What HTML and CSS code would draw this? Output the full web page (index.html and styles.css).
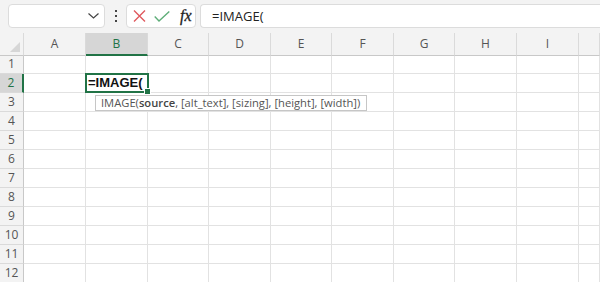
FILE: index.html
```html
<!DOCTYPE html>
<html lang="en">
<head>
  <meta charset="UTF-8" />
  <title>Book1 - Excel</title>
  <link rel="stylesheet" href="styles.css">
</head>
<body>
  <div class="toolbar">
    <div class="namebox">
      <svg class="chevron" width="11" height="6" viewBox="0 0 11 6"><path d="M0.5 0.5 L5.5 5 L10.5 0.5" fill="none" stroke="#444" stroke-width="1.2"/></svg>
    </div>
    <div class="dots"><span></span><span></span><span></span></div>
    <div class="fxbtns">
      <svg width="13" height="12" viewBox="0 0 13 12"><path d="M1 0.5 L12 11.5 M12 0.5 L1 11.5" stroke="#e0595e" stroke-width="1.4" fill="none"/></svg>
      <svg width="16" height="11" viewBox="0 0 16 11"><path d="M0.7 5.5 L5 10 L15.3 0.5" stroke="#5fae79" stroke-width="1.4" fill="none"/></svg>
      <span class="fx">fx</span>
    </div>
    <div class="formula">=IMAGE(</div>
  </div>

  <div class="sheet">
    <div class="corner"><span class="tri"></span></div>
    <div class="colhead">A</div>
    <div class="colhead sel">B</div>
    <div class="colhead">C</div>
    <div class="colhead">D</div>
    <div class="colhead">E</div>
    <div class="colhead">F</div>
    <div class="colhead">G</div>
    <div class="colhead">H</div>
    <div class="colhead">I</div>
    <div class="colhead"></div>
  </div>

  <div class="rows" id="rows"></div>

  <div class="active-cell">=IMAGE(<span class="handle"></span></div>
  <div class="tip">IMAGE(<b>source</b>, [alt_text], [sizing], [height], [width])</div>

  <script>
    const rows = document.getElementById('rows');
    for (let r = 1; r <= 12; r++) {
      let html = '<div class="rowhead' + (r === 2 ? ' sel' : '') + '">' + r + '</div>';
      for (let c = 0; c < 10; c++) {
        html += '<div class="cell"></div>';
      }
      rows.innerHTML += html;
    }
  </script>
</body>
</html>
```

FILE: styles.css
```css
body {
  margin: 0;
  width: 600px;
  height: 282px;
  overflow: hidden;
  background: #fff;
  font-family: "Open Sans", "Liberation Sans", sans-serif;
  position: relative;
}
.toolbar {
  height: 33px;
  background: #f3f3f3;
  display: flex;
  align-items: flex-start;
  padding: 4px 0 0 8px;
  box-sizing: border-box;
}
.namebox {
  width: 97px;
  height: 24px;
  box-sizing: border-box;
  background: #fff;
  border: 1px solid #dcdcdc;
  border-radius: 4px;
  display: flex;
  align-items: center;
  justify-content: flex-end;
  padding-right: 5px;
}
.dots {
  width: 21px;
  height: 24px;
  display: flex;
  flex-direction: column;
  align-items: center;
  justify-content: center;
  gap: 3px;
}
.dots span {
  width: 2px;
  height: 2px;
  background: #444;
}
.fxbtns {
  width: 70px;
  height: 24px;
  box-sizing: border-box;
  background: #fff;
  border: 1px solid #dcdcdc;
  border-radius: 4px;
  display: flex;
  align-items: center;
  padding-left: 6px;
  gap: 8px;
}
.fx {
  font-family: "Liberation Serif", serif;
  font-style: italic;
  font-size: 16px;
  color: #222;
  margin-left: 2px;
  -webkit-text-stroke: 0.3px #222;
}
.formula {
  flex: 1;
  margin-left: 4px;
  height: 24px;
  box-sizing: border-box;
  background: #fff;
  border: 1px solid #dcdcdc;
  border-right: none;
  border-radius: 4px 0 0 4px;
  padding-left: 11px;
  font-size: 13px;
  line-height: 22px;
  color: #222;
}
.sheet, .rows {
  display: grid;
  grid-template-columns: 24px 62px 62px 61px 62px 61px 62px 61px 62px 62px 1fr;
}
.sheet {
  height: 22px;
  background: #f3f3f3;
}
.corner, .colhead {
  box-sizing: border-box;
  border-bottom: 1px solid #c8c8c8;
  border-right: 1px solid #dadada;
  position: relative;
}
.tri {
  position: absolute;
  right: 3px;
  bottom: 3px;
  width: 0;
  height: 0;
  border-left: 10px solid transparent;
  border-bottom: 10px solid #d6d6d6;
}
.colhead {
  text-align: center;
  font-size: 12px;
  line-height: 22px;
  color: #555;
}
.colhead.sel {
  background: #d6d6d6;
  color: #217346;
  border-bottom: 2px solid #217346;
  line-height: 21px;
}
.rowhead {
  height: 19px;
  box-sizing: border-box;
  background: #f3f3f3;
  border-right: 1px solid #c8c8c8;
  border-bottom: 1px solid #dadada;
  text-align: center;
  font-size: 12px;
  line-height: 18px;
  color: #555;
}
.rowhead.sel {
  background: #d6d6d6;
  color: #217346;
  border-right: 2px solid #217346;
}
.cell {
  height: 19px;
  box-sizing: border-box;
  border-right: 1px solid #e2e2e2;
  border-bottom: 1px solid #e2e2e2;
}
.active-cell {
  position: absolute;
  left: 85px;
  top: 73px;
  width: 64px;
  height: 20px;
  box-sizing: border-box;
  border: 2px solid #217346;
  background: #fff;
  font-family: "Liberation Sans", sans-serif;
  font-weight: bold;
  font-size: 13px;
  line-height: 16px;
  padding-left: 1px;
  color: #111;
}
.handle {
  position: absolute;
  right: -4px;
  bottom: -4px;
  width: 5px;
  height: 5px;
  background: #217346;
  border: 1px solid #fff;
}
.tip {
  position: absolute;
  left: 95px;
  top: 95px;
  width: 272px;
  height: 16px;
  box-sizing: border-box;
  background: #fff;
  border: 1px solid #c6c6c6;
  font-size: 11.2px;
  line-height: 14px;
  padding-left: 5px;
  color: #555;
  white-space: nowrap;
}
.tip b {
  font-weight: 600;
  color: #444;
}
```
